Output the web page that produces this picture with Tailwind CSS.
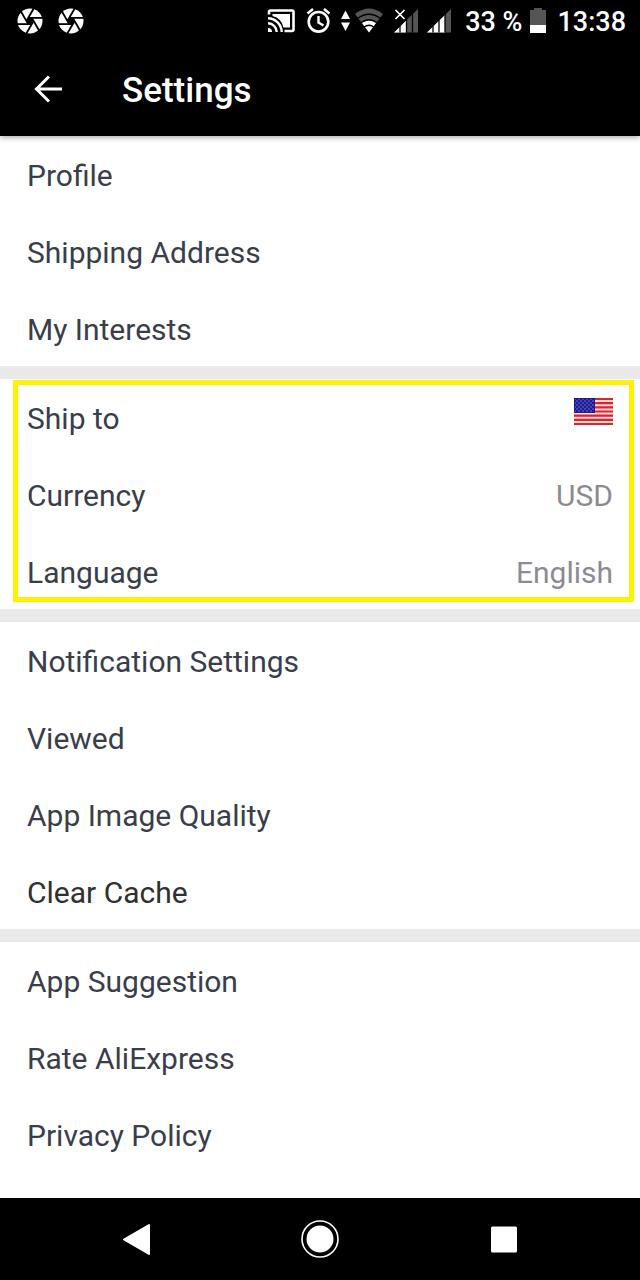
<!DOCTYPE html>
<html lang="en">
<head>
<meta charset="utf-8">
<meta name="viewport" content="width=device-width, initial-scale=1">
<title>Settings</title>
<script src="https://cdn.jsdelivr.net/npm/@tailwindcss/browser@4"></script>
</head>
<body class="flex min-h-screen flex-col bg-white font-['Roboto',sans-serif] text-[30px] leading-9 text-[#3a3e4a]">
  <svg class="hidden" aria-hidden="true">
    <symbol id="iris" viewBox="-13 -13 26 26">
      <circle r="12.5" fill="#fff"/>
      <polygon points="-1.8,-3.1 1.8,-3.1 3.6,0 1.8,3.1 -1.8,3.1 -3.6,0" fill="#000"/>
      <g stroke="#000" stroke-width="1.8">
        <path d="M-1.8-3.1H13"/>
        <path d="M-1.8-3.1H13" transform="rotate(60)"/>
        <path d="M-1.8-3.1H13" transform="rotate(120)"/>
        <path d="M-1.8-3.1H13" transform="rotate(180)"/>
        <path d="M-1.8-3.1H13" transform="rotate(240)"/>
        <path d="M-1.8-3.1H13" transform="rotate(300)"/>
      </g>
    </symbol>
  </svg>

  <header class="relative z-10 bg-black text-white shadow-[0_1px_6px_rgba(0,0,0,0.4)]">
    <div class="flex h-[42px] items-center justify-between pr-[14px] pl-[17px]">
      <div class="flex gap-[15px]">
        <svg class="size-[26px]"><use href="#iris"/></svg>
        <svg class="size-[26px]"><use href="#iris"/></svg>
      </div>
      <div class="flex items-center text-[27px] font-medium">
        <svg class="h-[26px] w-[186px]" viewBox="267 8 186 26" fill="none">
          <!-- cast -->
          <path d="M269 14.500V12q0-1.500 1.500-1.500h21.500q1.500 0 1.500 1.500v17.500q0 1.500-1.500 1.500h-7.500" stroke="#fff" stroke-width="2.600"/>
          <path d="M272.500 14H290v13.500h-6.500a15 15 0 0 0-11-11.500z" fill="#fff"/>
          <path d="M268 18.300a14 14 0 0 1 13.700 13.700M268 23.300a9 9 0 0 1 8.700 8.700" stroke="#fff" stroke-width="2.400"/>
          <path d="M268 28a4 4 0 0 1 4 4h-4z" fill="#fff"/>
          <!-- alarm -->
          <circle cx="318.500" cy="21.800" r="9.800" stroke="#fff" stroke-width="2.600"/>
          <path d="M318.500 16v6.500l5 3M307.500 13.500l5.500-4.500M324 9l5.500 4.500" stroke="#fff" stroke-width="2.400"/>
          <!-- data arrows -->
          <path d="M341 19l4.500-8.500L350 19zM341 22.500h9l-4.500 8.500z" fill="#fff"/>
          <!-- wifi -->
          <path d="M355 14q14-11 28 0l-14 18.500z" fill="#555"/>
          <path d="M362 23q7-5 14 0l-7 9.500z" fill="#fff"/>
          <path d="M357.500 18.500q11.500-8.500 23 0M361 22.500q8-5.500 16 0M364 27q5-3.500 10 0" stroke="#000" stroke-width="1.300"/>
          <!-- signal without service -->
          <path d="M394 32.500L418 9v23.500z" fill="#555"/>
          <path d="M394 32.500L406 20.800v11.700z" fill="#fff"/>
          <path d="M400 12v20.500M406.500 12v20.500M412.500 12v20.500" stroke="#000" stroke-width="1.300"/>
          <path d="M394 8h12v11.500h-12z" fill="#000"/>
          <path d="M395.500 10l9 9M404.500 10l-9 9" stroke="#fff" stroke-width="1.700"/>
          <!-- signal -->
          <path d="M427 32.500L451 9v23.500z" fill="#555"/>
          <path d="M427 32.500L445 14.900v17.600z" fill="#fff"/>
          <path d="M433 12v20.500M439 12v20.500M445 12v20.500" stroke="#000" stroke-width="1.300"/>
        </svg>
        <span class="ml-3 pt-px">33 %</span>
        <svg class="ml-2 h-[26px] w-4" viewBox="0 0 16 26"><path d="M0 2h4V0h8v2h4v23H0z" fill="#555"/><path d="M0 17h16v8H0z" fill="#fff"/></svg>
        <span class="ml-[11px] pt-px">13:38</span>
      </div>
    </div>
    <div class="flex h-[94px] items-center pt-1 pl-[34px]">
      <button type="button" aria-label="Back" class="mr-[60px] mb-1">
        <svg class="h-7 w-7" viewBox="0 0 28 28" fill="none" stroke="#fff" stroke-width="3"><path d="M28 14H3M15 1.500L2.500 14 15 26.500"/></svg>
      </button>
      <h1 class="text-[35px] leading-10 font-medium">Settings</h1>
    </div>
  </header>

  <main class="flex grow flex-col gap-[13px] bg-[#e9e9e9]">
    <nav class="flex flex-col gap-px bg-white" aria-label="Account">
      <a href="#profile" class="flex h-[76px] items-center px-[27px] pt-1">Profile</a>
      <a href="#address" class="flex h-[76px] items-center px-[27px] pt-1">Shipping Address</a>
      <a href="#interests" class="flex h-[76px] items-center px-[27px] pt-1">My Interests</a>
    </nav>
    <nav class="relative flex flex-col gap-px bg-white" aria-label="Region">
      <a href="#ship" class="flex h-[76px] items-center justify-between px-[27px] pt-1">Ship to
        <svg class="mb-4 h-[27px] w-[39px]" viewBox="0 0 39 27" role="img" aria-label="United States">
          <defs><pattern id="stars" width="4" height="4" patternUnits="userSpaceOnUse"><circle cx="1" cy="1" r=".7" fill="#8f8fdc"/><circle cx="3" cy="3" r=".7" fill="#8f8fdc"/></pattern></defs>
          <path d="M0 0h39v27H0z" fill="#ffdada"/>
          <path d="M0 1h39M0 5.200h39M0 9.400h39M0 13.500h39M0 17.600h39M0 21.800h39M0 26h39" stroke="#d7262c" stroke-width="2.200"/>
          <path d="M0 0h21v15H0z" fill="#1d1a94"/><path d="M1 1h19v13H1z" fill="url(#stars)"/>
        </svg>
      </a>
      <a href="#currency" class="flex h-[76px] items-center justify-between px-[27px] pt-1">Currency <span class="text-[#8b8c92]">USD</span></a>
      <a href="#language" class="flex h-[76px] items-center justify-between px-[27px] pt-1">Language <span class="text-[#8b8c92]">English</span></a>
      <div class="pointer-events-none absolute top-px right-[6px] bottom-[7px] left-[13px] border-5 border-[#fff200]"></div>
    </nav>
    <nav class="flex flex-col gap-px bg-white" aria-label="App">
      <a href="#notifications" class="flex h-[76px] items-center px-[27px] pt-1">Notification Settings</a>
      <a href="#viewed" class="flex h-[76px] items-center px-[27px] pt-1">Viewed</a>
      <a href="#quality" class="flex h-[76px] items-center px-[27px] pt-1">App Image Quality</a>
      <button type="button" class="flex h-[76px] w-full items-center px-[27px] pt-1 text-[#303030]">Clear Cache</button>
    </nav>
    <nav class="flex grow flex-col gap-px bg-white" aria-label="About">
      <a href="#suggestion" class="flex h-[76px] items-center px-[27px] pt-1">App Suggestion</a>
      <a href="#rate" class="flex h-[76px] items-center px-[27px] pt-1">Rate AliExpress</a>
      <a href="#privacy" class="flex h-[76px] items-center px-[27px] pt-1">Privacy Policy</a>
    </nav>
  </main>

  <footer class="flex h-[82px] items-center justify-around bg-black px-11">
    <button type="button" aria-label="Back"><svg class="size-[38px]" viewBox="0 0 38 38"><path d="M7 19.500L32 5v29z" fill="#fff" stroke="#fff" stroke-width="2" stroke-linejoin="round"/></svg></button>
    <button type="button" aria-label="Home"><svg class="size-[38px]" viewBox="0 0 38 38"><circle cx="19" cy="19" r="18" fill="none" stroke="#fff" stroke-width="1.600"/><circle cx="19" cy="19" r="13.500" fill="#fff"/></svg></button>
    <button type="button" aria-label="Recent apps"><svg class="size-[38px]" viewBox="0 0 38 38"><rect x="6" y="6.500" width="26" height="26" rx="1.500" fill="#fff"/></svg></button>
  </footer>
</body>
</html>
